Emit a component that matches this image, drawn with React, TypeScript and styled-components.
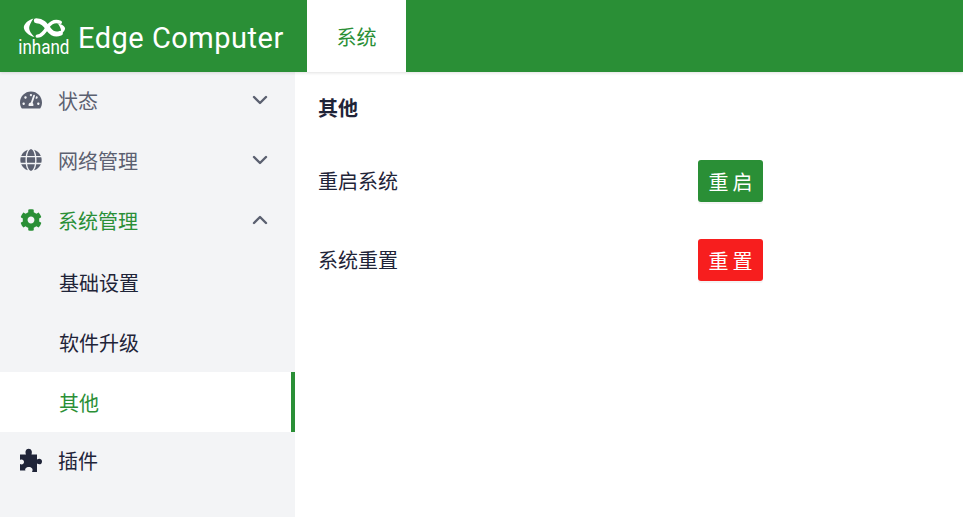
import React from "react";
import styled, { createGlobalStyle } from "styled-components";
import { FaTachometerAlt, FaGlobe, FaCog } from "react-icons/fa";

const GREEN = "#2a8f36";
const CJK = `"Noto Sans CJK SC", "Liberation Sans", sans-serif`;

const Global = createGlobalStyle`
  html, body { margin: 0; padding: 0; background: #fff; overflow: hidden; }
  body { font-family: ${CJK}; }
`;

const Page = styled.div`
  width: 963px;
  height: 517px;
  display: flex;
  flex-direction: column;
  overflow: hidden;
`;
const Header = styled.header`
  height: 72px;
  flex: none;
  display: flex;
  background: ${GREEN};
  position: relative;
  z-index: 2;
  box-shadow: 0 1px 3px rgba(0, 0, 0, 0.12);
`;
const Brand = styled.div`
  width: 307px;
  flex: none;
  display: flex;
  align-items: center;
  padding-left: 18px;
  box-sizing: border-box;
  gap: 9px;
  color: #fff;
`;
const LogoBox = styled.div`
  width: 51px;
  height: 40px;
  display: flex;
  flex-direction: column;
  align-items: center;
`;
const LogoWord = styled.span`
  font: 400 20.5px/18px Roboto, sans-serif;
  transform: scaleX(0.83);
  margin-top: -1px;
  white-space: nowrap;
`;
const Wordmark = styled.span`
  font: 400 29px/36px Roboto, sans-serif;
  letter-spacing: 0.5px;
  white-space: nowrap;
  margin-top: 3px;
`;
const Tab = styled.div`
  width: 99px;
  background: #fff;
  color: ${GREEN};
  font-size: 20px;
  display: flex;
  align-items: center;
  justify-content: center;
`;
const Body = styled.div`
  flex: 1;
  display: flex;
  min-height: 0;
`;
const Sidebar = styled.nav`
  width: 295px;
  flex: none;
  background: #f3f4f6;
  display: flex;
  flex-direction: column;
  margin-top: -1px;
`;
const MenuRow = styled.div<{ $tone: string; $lift?: number }>`
  height: 60px;
  flex: none;
  box-sizing: border-box;
  display: flex;
  align-items: center;
  padding: 0 27px ${(p) => p.$lift ?? 2}px 20px;
  color: ${(p) => p.$tone};
  font-size: 20px;
`;
const MenuIcon = styled.span`
  width: 22px;
  margin-right: 16px;
  display: flex;
  justify-content: center;
  font-size: 22px;
`;
const MenuLabel = styled.span`
  flex: 1;
`;
const SubMenu = styled.div`
  margin-top: 1px;
  display: flex;
  flex-direction: column;
`;
const SubRow = styled.div<{ $active?: boolean }>`
  height: 60px;
  flex: none;
  box-sizing: border-box;
  display: flex;
  align-items: center;
  padding-left: 59px;
  font-size: 20px;
  color: ${(p) => (p.$active ? GREEN : "#1f2438")};
  background: ${(p) => (p.$active ? "#fff" : "transparent")};
  border-right: 4px solid ${(p) => (p.$active ? GREEN : "transparent")};
`;
const Main = styled.main`
  flex: 1;
  padding: 20px 24px 0 23px;
  display: flex;
  flex-direction: column;
`;
const Title = styled.h2`
  margin: 0 0 36px;
  font-size: 20px;
  line-height: 32px;
  font-weight: 700;
  color: #1f2438;
`;
const Rows = styled.div`
  display: flex;
  flex-direction: column;
  gap: 37px;
`;
const Row = styled.div`
  display: flex;
  align-items: center;
`;
const RowLabel = styled.span`
  width: 380px;
  font-size: 20px;
  padding-bottom: 2px;
  color: #1f2438;
`;
const ActionButton = styled.button<{ $bg: string }>`
  width: 65px;
  height: 42px;
  border: 0;
  padding: 0;
  border-radius: 3px;
  background: ${(p) => p.$bg};
  color: #fff;
  font: 400 20px ${CJK};
  letter-spacing: 4px;
  text-indent: 4px;
  box-shadow: 0 2px 0 rgba(0, 0, 0, 0.045);
`;

const Chevron = ({ up }: { up?: boolean }) => (
  <svg width="16" height="10" viewBox="0 0 16 10" fill="none" stroke="#5b6070" strokeWidth="2.4" strokeLinecap="round" strokeLinejoin="round">
    <path d={up ? "M2 8 L8 2 L14 8" : "M2 2 L8 8 L14 2"} />
  </svg>
);

const PuzzleIcon = () => (
  <svg width="22" height="24" viewBox="5 4 22 24" fill="currentColor">
    <path d="M11 10.5 C10 8 10.5 4.7 13.7 4.7 C16.7 4.7 17.5 8 16.5 10.5 L22 10.5 L22 15.5 C24 14 27 14.5 27 17.5 C27 20.5 24 21 22 19.5 L22 28 L17 28 C18.5 25.5 17 23 14 23 C11 23 9.5 25 10.5 26.5 L5 26.5 L5 20 C7 21 9 20 9 18 C9 16 7 15 5 16 L5 10.5 Z" />
  </svg>
);

const LogoMark = () => (
  <svg width="46" height="24" viewBox="20 16 46 24" fill="none" stroke="#fff" strokeLinecap="round">
    <path d="M32 18.5 C26 20 21.5 25 22 28.5 C22.5 32 27 36.5 33 38 C29.5 34.5 27.5 31 27.5 28.5 C27.5 26 29.5 22 32 18.5 Z" fill="#fff" stroke="none" />
    <path d="M35 21 C42 21 45 26 48 30 C51 34 55 36 60 34" strokeWidth="5.2" />
    <path d="M36 37 C41 37 44 32 47 27 C50 23 54 20 60 22.5" strokeWidth="3.6" />
    <path d="M57 23.5 C62 24.5 65 27 65 29 C65 31 63 33 60 35.5 C61.5 32 61 28 57 23.5 Z" fill="#fff" stroke="none" />
  </svg>
);

export default function App() {
  return (
    <Page>
      <Global />
      <Header>
        <Brand>
          <LogoBox>
            <LogoMark />
            <LogoWord>inhand</LogoWord>
          </LogoBox>
          <Wordmark>Edge Computer</Wordmark>
        </Brand>
        <Tab>系统</Tab>
      </Header>
      <Body>
        <Sidebar>
          <MenuRow $tone="#5b6070">
            <MenuIcon><FaTachometerAlt /></MenuIcon>
            <MenuLabel>状态</MenuLabel>
            <Chevron />
          </MenuRow>
          <MenuRow $tone="#5b6070">
            <MenuIcon><FaGlobe /></MenuIcon>
            <MenuLabel>网络管理</MenuLabel>
            <Chevron />
          </MenuRow>
          <MenuRow $tone={GREEN}>
            <MenuIcon><FaCog /></MenuIcon>
            <MenuLabel>系统管理</MenuLabel>
            <Chevron up />
          </MenuRow>
          <SubMenu>
            <SubRow>基础设置</SubRow>
            <SubRow>软件升级</SubRow>
            <SubRow $active>其他</SubRow>
          </SubMenu>
          <MenuRow $tone="#1f2438" $lift={4}>
            <MenuIcon><PuzzleIcon /></MenuIcon>
            <MenuLabel>插件</MenuLabel>
          </MenuRow>
        </Sidebar>
        <Main>
          <Title>其他</Title>
          <Rows>
            <Row>
              <RowLabel>重启系统</RowLabel>
              <ActionButton $bg={GREEN}>重启</ActionButton>
            </Row>
            <Row>
              <RowLabel>系统重置</RowLabel>
              <ActionButton $bg="#f71e1e">重置</ActionButton>
            </Row>
          </Rows>
        </Main>
      </Body>
    </Page>
  );
}
